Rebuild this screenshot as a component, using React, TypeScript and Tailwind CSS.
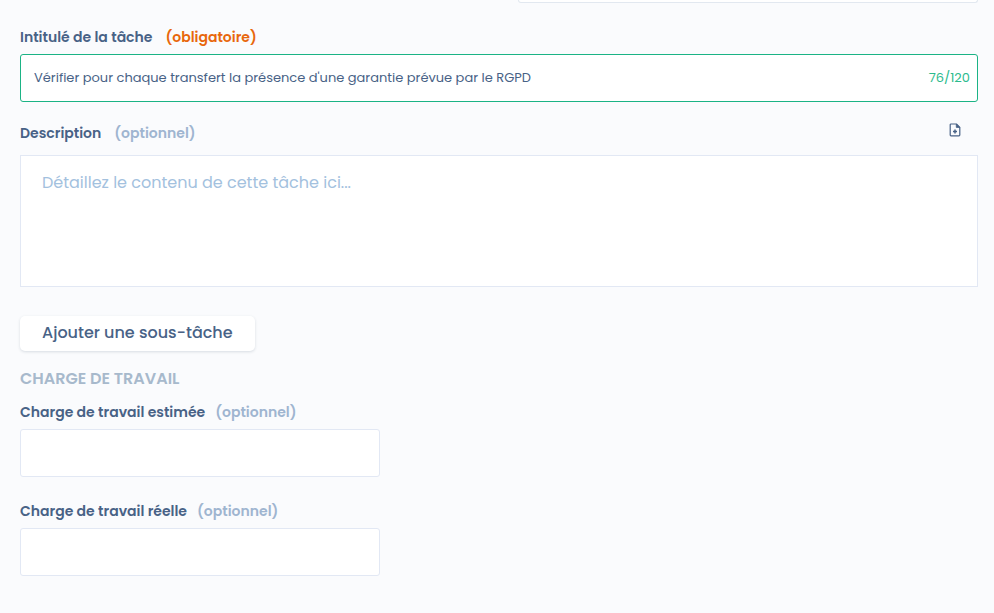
import { useState } from "react";

const MAX_LENGTH = 120;

const FilePlusIcon = () => (
  <svg width="12" height="14" viewBox="0 0 12 14" fill="none" stroke="currentColor" aria-hidden="true">
    <path d="M7.4 1H2a.8.8 0 0 0-.8.8v10.3a.8.8 0 0 0 .8.8h8a.8.8 0 0 0 .8-.8V4.4z" strokeWidth="1.2" strokeLinejoin="round" />
    <path d="M7.3 1v3.4h3.4z" fill="currentColor" strokeWidth="0.8" strokeLinejoin="round" />
    <path d="M6 6.5v4M4 8.5h4" strokeWidth="1.5" />
  </svg>
);

type WorkloadFieldProps = {
  id: string;
  label: string;
};

const WorkloadField = ({ id, label }: WorkloadFieldProps) => {
  const [value, setValue] = useState("");

  return (
    <div>
      <label htmlFor={id} className="flex gap-[10px] mb-[7px] text-sm leading-5 font-semibold">
        {label}
        <span className="text-[#9fb5d0]">(optionnel)</span>
      </label>
      <input
        id={id}
        type="text"
        className="block h-12 w-full max-w-[360px] rounded-[3px] border border-[#e2e8f4] bg-white px-[13px] text-[13px] outline-none"
        value={value}
        onChange={(e) => setValue(e.target.value)}
      />
    </div>
  );
};

const App = () => {
  const [title, setTitle] = useState("Vérifier pour chaque transfert la présence d'une garantie prévue par le RGPD");
  const [description, setDescription] = useState("");

  return (
    <main className="min-h-screen bg-[#fafbfd] pl-5 pr-4 pb-9 font-[Poppins,Inter,sans-serif] text-[#486286]">
      {/* Bottom edge of the previous row */}
      <div className="grid grid-cols-2 gap-[38px]">
        <div className="col-start-2 h-[3px] rounded-b-[3px] border border-t-0 border-[#e2e8f0] bg-white" />
      </div>

      {/* Title */}
      <div className="mt-6">
        <label htmlFor="title" className="flex gap-[13px] mb-[7px] text-sm leading-5 font-semibold">
          Intitulé de la tâche
          <span className="text-[#e8670c]">(obligatoire)</span>
        </label>
        <div className="flex h-12 items-center rounded-[3px] border border-[#1bb385] bg-white pl-[13px] pr-[7px]">
          <input
            id="title"
            type="text"
            maxLength={MAX_LENGTH}
            className="min-w-0 flex-1 bg-transparent text-[13px] outline-none"
            value={title}
            onChange={(e) => setTitle(e.target.value)}
          />
          <span className="ml-2 text-[13px] text-[#2cbb8d]">
            {title.length}/{MAX_LENGTH}
          </span>
        </div>
      </div>

      {/* Description */}
      <div className="mt-[21px]">
        <div className="mb-3 flex items-start justify-between">
          <label htmlFor="description" className="flex gap-[13px] text-sm leading-5 font-semibold">
            Description
            <span className="text-[#9fb5d0]">(optionnel)</span>
          </label>
          <button type="button" aria-label="Ajouter un fichier" className="mr-[17px] cursor-pointer">
            <FilePlusIcon />
          </button>
        </div>
        <textarea
          id="description"
          placeholder="Détaillez le contenu de cette tâche ici..."
          className="block h-[132px] w-full resize-none border border-[#e2e8f4] bg-white px-[21px] py-[15px] text-base outline-none placeholder:text-[#a3c1de]"
          value={description}
          onChange={(e) => setDescription(e.target.value)}
        />
      </div>

      <button
        type="button"
        className="mt-[29px] block h-[35px] cursor-pointer rounded-[5px] bg-white px-[22px] pb-0.5 text-base font-medium shadow-[0_1px_3px_rgba(40,60,90,0.16)]"
      >
        Ajouter une sous-tâche
      </button>

      {/* Workload */}
      <section className="mt-[18px]">
        <h2 className="mb-[13px] text-base leading-5 font-semibold uppercase text-[#a7b9cc]">Charge de travail</h2>
        <div className="flex flex-col gap-6">
          <WorkloadField id="estimated" label="Charge de travail estimée" />
          <WorkloadField id="actual" label="Charge de travail réelle" />
        </div>
      </section>
    </main>
  );
};

export default App;
